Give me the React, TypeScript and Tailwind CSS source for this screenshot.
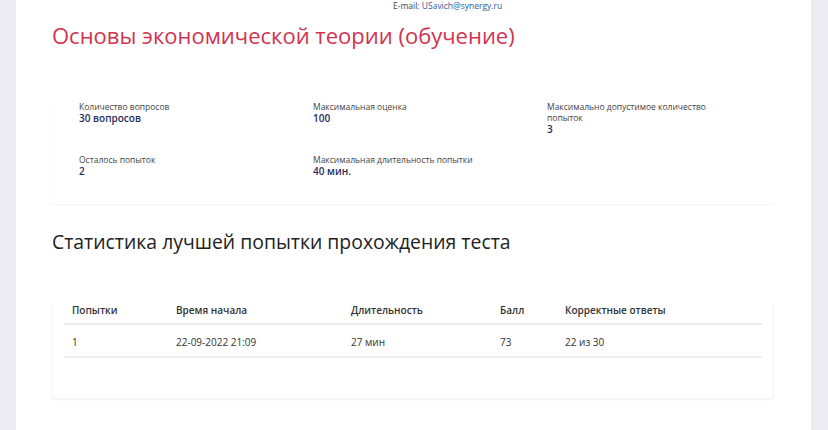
export default function App() {
  const info = [
    { label: "Количество вопросов", value: "30 вопросов" },
    { label: "Максимальная оценка", value: "100" },
    { label: "Максимально допустимое количество попыток", value: "3" },
    { label: "Осталось попыток", value: "2" },
    { label: "Максимальная длительность попытки", value: "40 мин." },
  ];

  return (
    <div className="flex h-[430px] w-[828px] overflow-hidden bg-[#ecebf1] font-['Open_Sans',sans-serif]">
      <div className="w-[16px] shrink-0 bg-[#ecebf1]" />
      <div className="flex-1 bg-white pl-[36px] pr-[37px]">
        <div className="flex h-[12px] items-center pl-[341px] text-[8.5px] leading-none text-[#444]">
          E-mail:&nbsp;<span className="text-[#2f5b9a]">USavich@synergy.ru</span>
        </div>

        <h1 className="mt-[9px] text-[22px] leading-[28px] text-[#d2334f]">
          Основы экономической теории (обучение)
        </h1>

        <div className="mt-[52px] grid grid-cols-[234px_234px_1fr] gap-y-[18px] rounded-[3px] pb-[26px] pl-[27px] pr-[30px] shadow-[0_1px_2px_rgba(0,0,0,0.06)]">
          {info.map((item) => (
            <div key={item.label} className="max-w-[178px]">
              <div className="text-[8.5px] leading-[11px] text-[#444]">{item.label}</div>
              <div className="text-[10px] font-semibold leading-[13px] text-[#1f2d5c]">{item.value}</div>
            </div>
          ))}
        </div>

        <h2 className="mt-[25px] text-[19.4px] leading-[26px] text-[#222]">
          Статистика лучшей попытки прохождения теста
        </h2>

        <div className="mt-[47px] rounded-[3px] border border-[#f6f6f6] border-t-white px-[11px] pb-[40px] shadow-[0_1px_2px_rgba(0,0,0,0.05)]">
          <table className="w-full border-collapse text-left text-[10px] text-[#333]">
            <thead>
              <tr className="border-b-2 border-[#ececec]">
                <th className="w-[112px] pl-[8px] pb-[5px] font-semibold">Попытки</th>
                <th className="w-[175px] pb-[5px] font-semibold">Время начала</th>
                <th className="w-[149px] pb-[5px] font-semibold">Длительность</th>
                <th className="w-[65px] pb-[5px] font-semibold">Балл</th>
                <th className="pb-[5px] font-semibold">Корректные ответы</th>
              </tr>
            </thead>
            <tbody>
              <tr className="border-b-2 border-[#f0f0f0]">
                <td className="pl-[8px] pt-[10px] pb-[6px] font-normal">1</td>
                <td className="pt-[10px] pb-[6px]">22-09-2022 21:09</td>
                <td className="pt-[10px] pb-[6px]">27 мин</td>
                <td className="pt-[10px] pb-[6px]">73</td>
                <td className="pt-[10px] pb-[6px]">22 из 30</td>
              </tr>
            </tbody>
          </table>
        </div>
      </div>
      <div className="w-[17px] shrink-0 bg-[#ecebf1]" />
    </div>
  );
}
